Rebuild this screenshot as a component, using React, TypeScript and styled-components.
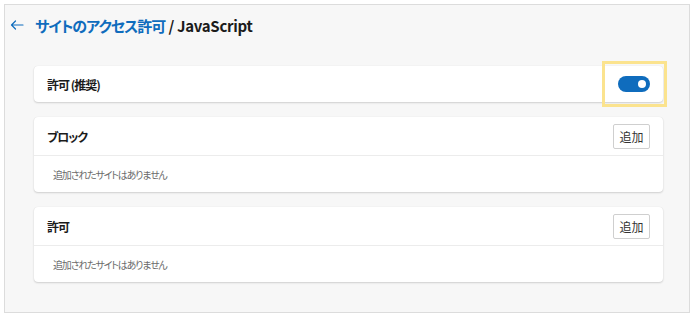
import styled, { createGlobalStyle } from 'styled-components';

const GlobalStyle = createGlobalStyle`
  html, body {
    margin: 0;
    background: #ffffff;
  }
  body {
    font-family: "Noto Sans CJK JP", "Noto Sans", sans-serif;
    font-feature-settings: "palt" 1;
    color: #1b1b1b;
  }
`;

const Frame = styled.div`
  margin: 4px 0 0 4px;
  width: 686px;
  height: 309px;
  box-sizing: border-box;
  border: 1px solid #dcdcdc;
  background: #f7f7f7;
  padding: 0 26px 0 29px;
`;

const Header = styled.div`
  display: flex;
  align-items: center;
  height: 40px;
  margin-left: -24px;
  gap: 10px;
`;

const BackButton = styled.button`
  border: none;
  background: none;
  padding: 0;
  width: 15px;
  height: 14px;
  display: flex;
  align-items: center;
  cursor: pointer;
`;

const Title = styled.h1`
  margin: 0;
  font-size: 15px;
  font-weight: 600;
  letter-spacing: -0.3px;
  color: #1b1b1b;
`;

const TitleLink = styled.span`
  color: #0f6cbd;
  letter-spacing: -1px;
`;

const Stack = styled.div`
  display: flex;
  flex-direction: column;
  gap: 15px;
  margin-top: 21px;
`;

const Card = styled.section`
  position: relative;
  background: #ffffff;
  border-radius: 4px;
  box-shadow: 0 1px 2px rgba(0, 0, 0, 0.16), 0 0 1px rgba(0, 0, 0, 0.1);
`;

const Row = styled.div<{ $height: number; $divider?: boolean }>`
  display: flex;
  align-items: center;
  justify-content: space-between;
  height: ${(p) => p.$height}px;
  padding: 0 13px;
  border-bottom: ${(p) => (p.$divider ? '1px solid #ececec' : 'none')};
`;

const Label = styled.span`
  font-size: 12px;
  font-weight: 600;
  letter-spacing: -1px;
  color: #1b1b1b;
`;

const Empty = styled.div`
  display: flex;
  align-items: center;
  height: 36px;
  padding-left: 19px;
  font-size: 10px;
  letter-spacing: -1.2px;
  color: #6b6b6b;
`;

const AddButton = styled.button`
  font-family: inherit;
  font-feature-settings: "palt" 1;
  width: 37px;
  height: 25px;
  padding: 0;
  border: 1px solid #cfcfcf;
  border-radius: 2px;
  background: #ffffff;
  color: #333333;
  font-size: 12px;
`;

const Toggle = styled.div`
  position: relative;
  width: 32px;
  height: 16px;
  border-radius: 8px;
  background: #0f6cbd;
`;

const Knob = styled.span`
  position: absolute;
  top: 4px;
  right: 4px;
  width: 8px;
  height: 8px;
  border-radius: 50%;
  background: #ffffff;
`;

const Highlight = styled.div`
  position: absolute;
  top: -5px;
  right: -4px;
  width: 65px;
  height: 46px;
  box-sizing: border-box;
  border: 3px solid #fbe38e;
  pointer-events: none;
`;

const SiteList = ({ title }: { title: string }) => (
  <Card>
    <Row $height={38} $divider>
      <Label>{title}</Label>
      <AddButton type="button">追加</AddButton>
    </Row>
    <Empty>追加されたサイトはありません</Empty>
  </Card>
);

const App = () => (
  <>
    <GlobalStyle />
    <Frame>
      <Header>
        <BackButton type="button" aria-label="戻る">
          <svg width="14" height="10" viewBox="0 0 14 10" fill="none">
            <path
              d="M13 5H1.5M5.5 1L1.5 5L5.5 9"
              stroke="#0f6cbd"
              strokeWidth="1.2"
              strokeLinecap="round"
              strokeLinejoin="round"
            />
          </svg>
        </BackButton>
        <Title>
          <TitleLink>サイトのアクセス許可</TitleLink> / JavaScript
        </Title>
      </Header>
      <Stack>
        <Card>
          <Row $height={36}>
            <Label>許可 (推奨)</Label>
            <Toggle>
              <Knob />
            </Toggle>
          </Row>
          <Highlight />
        </Card>
        <SiteList title="ブロック" />
        <SiteList title="許可" />
      </Stack>
    </Frame>
  </>
);

export default App;
